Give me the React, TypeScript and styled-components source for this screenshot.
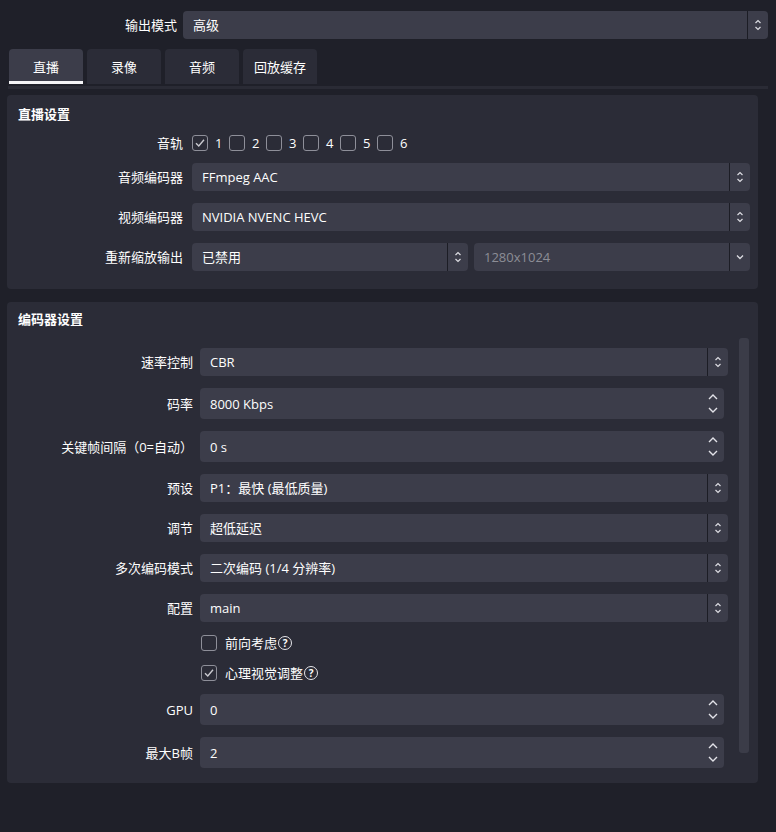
import React, { FC } from 'react';
import styled, { createGlobalStyle } from 'styled-components';

const palette = {
    page: '#1f2029',
    panel: '#2b2c37',
    field: '#3c3d4a',
    divider: '#1c1d25',
    text: '#fefefe',
    muted: '#8c8d96',
    box: '#8e8f99',
};

const GlobalStyle = createGlobalStyle`
    html, body {
        margin: 0;
        padding: 0;
        background: ${palette.page};
    }
`;

const Page = styled.div`
    width: 776px;
    height: 832px;
    box-sizing: border-box;
    padding: 11px 8px 0 7px;
    background: ${palette.page};
    color: ${palette.text};
    font-family: "Open Sans", "Noto Sans CJK SC", sans-serif;
    font-size: 13px;
    line-height: 16px;
`;

const TopRow = styled.div`
    display: grid;
    grid-template-columns: 170px 1fr;
    column-gap: 6px;
    align-items: center;
`;

const Label = styled.div`
    text-align: right;
    white-space: nowrap;
`;

const TabBar = styled.div`
    display: flex;
    gap: 4px;
    margin-top: 10px;
    padding-left: 2px;
`;

const Tab = styled.div<{ active?: boolean }>`
    position: relative;
    width: 74px;
    height: 35px;
    display: flex;
    align-items: center;
    justify-content: center;
    border-radius: 4px 4px 0 0;
    background: ${(p) => (p.active ? palette.field : palette.panel)};
    box-sizing: border-box;
    &::after {
        content: '';
        display: ${(p) => (p.active ? 'block' : 'none')};
        position: absolute;
        left: 0;
        right: 0;
        bottom: 0;
        height: 3px;
        background: #f4f4f6;
    }
`;

const TabLine = styled.div`
    height: 3px;
    margin: 2px 0 6px 1px;
    background: #2a2b35;
`;

const Panel = styled.div<{ pad: string }>`
    background: ${palette.panel};
    border-radius: 4px;
    margin-right: 10px;
    padding: ${(p) => p.pad};
    display: flex;
    flex-direction: column;
`;

const PanelTitle = styled.div`
    height: 18px;
    line-height: 18px;
    padding-left: 11px;
    font-weight: bold;
`;

const FormGrid = styled.div<{ labelWidth: number; colGap: number; right?: number }>`
    display: grid;
    grid-template-columns: ${(p) => p.labelWidth}px 1fr;
    column-gap: ${(p) => p.colGap}px;
    row-gap: 12px;
    align-items: center;
    padding-right: ${(p) => p.right || 0}px;
`;

const FieldBox = styled.div<{ height: number; disabled?: boolean; inset?: number }>`
    height: ${(p) => p.height}px;
    margin-right: ${(p) => p.inset || 0}px;
    display: flex;
    align-items: stretch;
    background: ${palette.field};
    border-radius: 4px;
    color: ${(p) => (p.disabled ? palette.muted : palette.text)};
    min-width: 0;
`;

const FieldText = styled.div`
    flex: 1;
    display: flex;
    align-items: center;
    padding-left: 10px;
    white-space: nowrap;
    overflow: hidden;
`;

const ArrowCell = styled.div<{ width: number; split?: boolean }>`
    width: ${(p) => p.width}px;
    flex: none;
    display: flex;
    align-items: center;
    justify-content: center;
    border-left: ${(p) => (p.split ? `1px solid ${palette.divider}` : 'none')};
`;

const Pair = styled.div`
    display: grid;
    grid-template-columns: 276px 1fr;
    column-gap: 6px;
`;

const TrackList = styled.div`
    display: flex;
    align-items: center;
    height: 16px;
`;

const TrackItem = styled.div`
    display: flex;
    align-items: center;
    width: 37px;
    gap: 7px;
`;

const Box = styled.div`
    width: 16px;
    height: 16px;
    box-sizing: border-box;
    border: 1.5px solid ${palette.box};
    border-radius: 3px;
    display: flex;
    align-items: center;
    justify-content: center;
    flex: none;
`;

const CheckRow = styled.div`
    grid-column: 2;
    height: 18px;
    display: flex;
    align-items: center;
    gap: 8px;
    padding-left: 1px;
`;

const CheckText = styled.div`
    display: flex;
    align-items: center;
`;

const Help = styled.span`
    width: 12px;
    height: 12px;
    border: 1.5px solid #e6e6ea;
    border-radius: 50%;
    display: inline-flex;
    align-items: center;
    justify-content: center;
    font-size: 10px;
    font-weight: bold;
    line-height: 1;
    margin-left: 1px;
`;

const ScrollArea = styled.div`
    display: flex;
    margin-top: 10px;
`;

const ScrollContent = styled.div`
    flex: 1;
    padding-top: 10px;
    min-width: 0;
`;

const ScrollHandle = styled.div`
    width: 10px;
    height: 415px;
    margin: 0 9px 0 11px;
    border-radius: 3px;
    background: #3b3c48;
    flex: none;
`;

const Spacer = styled.div<{ h: number }>`
    height: ${(p) => p.h}px;
    flex: none;
`;

const Tick: FC = () => (
    <svg width="12" height="12" viewBox="0 0 12 12">
        <path d="M2 6.2 L4.8 9 L10 2.8" fill="none" stroke="#c9c9cf" strokeWidth="1.4" />
    </svg>
);

const Check: FC<{ checked?: boolean }> = ({ checked }) => <Box>{checked && <Tick />}</Box>;

const SmallUpDown: FC = () => (
    <svg width="10" height="16" viewBox="0 0 10 16">
        <path d="M2.5 6 L5 3.5 L7.5 6 M2.5 10 L5 12.5 L7.5 10" fill="none" stroke="#dcdce2" strokeWidth="1.2" />
    </svg>
);

const SmallDown: FC = () => (
    <svg width="10" height="10" viewBox="0 0 10 10">
        <path d="M2 3.5 L5 6.5 L8 3.5" fill="none" stroke="#dcdce2" strokeWidth="1.3" />
    </svg>
);

const SpinArrows: FC = () => (
    <svg width="12" height="31" viewBox="0 0 12 31">
        <path d="M2 11 L6 7 L10 11 M2 20 L6 24 L10 20" fill="none" stroke="#e2e2e8" strokeWidth="1.4" />
    </svg>
);

interface ComboProps {
    value: string;
    disabled?: boolean;
    downOnly?: boolean;
}

const Combo: FC<ComboProps> = ({ value, disabled, downOnly }) => (
    <FieldBox height={28} disabled={disabled}>
        <FieldText>{value}</FieldText>
        <ArrowCell width={20} split>
            {downOnly ? <SmallDown /> : <SmallUpDown />}
        </ArrowCell>
    </FieldBox>
);

const Spin: FC<{ value: string }> = ({ value }) => (
    <FieldBox height={31} inset={4}>
        <FieldText>{value}</FieldText>
        <ArrowCell width={22}>
            <SpinArrows />
        </ArrowCell>
    </FieldBox>
);

const tracks = ['1', '2', '3', '4', '5', '6'];
const tabs = ['直播', '录像', '音频', '回放缓存'];

const App: FC = () => (
    <Page>
        <GlobalStyle />
        <TopRow>
            <Label>输出模式</Label>
            <Combo value="高级" />
        </TopRow>

        <TabBar>
            {tabs.map((t, i) => (
                <Tab key={t} active={i === 0}>{t}</Tab>
            ))}
        </TabBar>
        <TabLine />

        <Panel pad="10px 0 18px">
            <PanelTitle>直播设置</PanelTitle>
            <Spacer h={12} />
            <FormGrid labelWidth={176} colGap={9} right={8}>
                <Label>音轨</Label>
                <TrackList>
                    {tracks.map((n) => (
                        <TrackItem key={n}>
                            <Check checked={n === '1'} />
                            <span>{n}</span>
                        </TrackItem>
                    ))}
                </TrackList>
                <Label>音频编码器</Label>
                <Combo value="FFmpeg AAC" />
                <Label>视频编码器</Label>
                <Combo value="NVIDIA NVENC HEVC" />
                <Label>重新缩放输出</Label>
                <Pair>
                    <Combo value="已禁用" />
                    <Combo value="1280x1024" disabled downOnly />
                </Pair>
            </FormGrid>
        </Panel>

        <Spacer h={13} />

        <Panel pad="8px 0 15px">
            <PanelTitle>编码器设置</PanelTitle>
            <ScrollArea>
                <ScrollContent>
                    <FormGrid labelWidth={186} colGap={7}>
                        <Label>速率控制</Label>
                        <Combo value="CBR" />
                        <Label>码率</Label>
                        <Spin value="8000 Kbps" />
                        <Label>关键帧间隔（0=自动）</Label>
                        <Spin value="0 s" />
                        <Label>预设</Label>
                        <Combo value="P1：最快 (最低质量)" />
                        <Label>调节</Label>
                        <Combo value="超低延迟" />
                        <Label>多次编码模式</Label>
                        <Combo value="二次编码 (1/4 分辨率)" />
                        <Label>配置</Label>
                        <Combo value="main" />
                        <CheckRow>
                            <Check />
                            <CheckText>前向考虑<Help>?</Help></CheckText>
                        </CheckRow>
                        <CheckRow>
                            <Check checked />
                            <CheckText>心理视觉调整<Help>?</Help></CheckText>
                        </CheckRow>
                        <Label>GPU</Label>
                        <Spin value="0" />
                        <Label>最大B帧</Label>
                        <Spin value="2" />
                    </FormGrid>
                </ScrollContent>
                <ScrollHandle />
            </ScrollArea>
        </Panel>
    </Page>
);

export default App;
